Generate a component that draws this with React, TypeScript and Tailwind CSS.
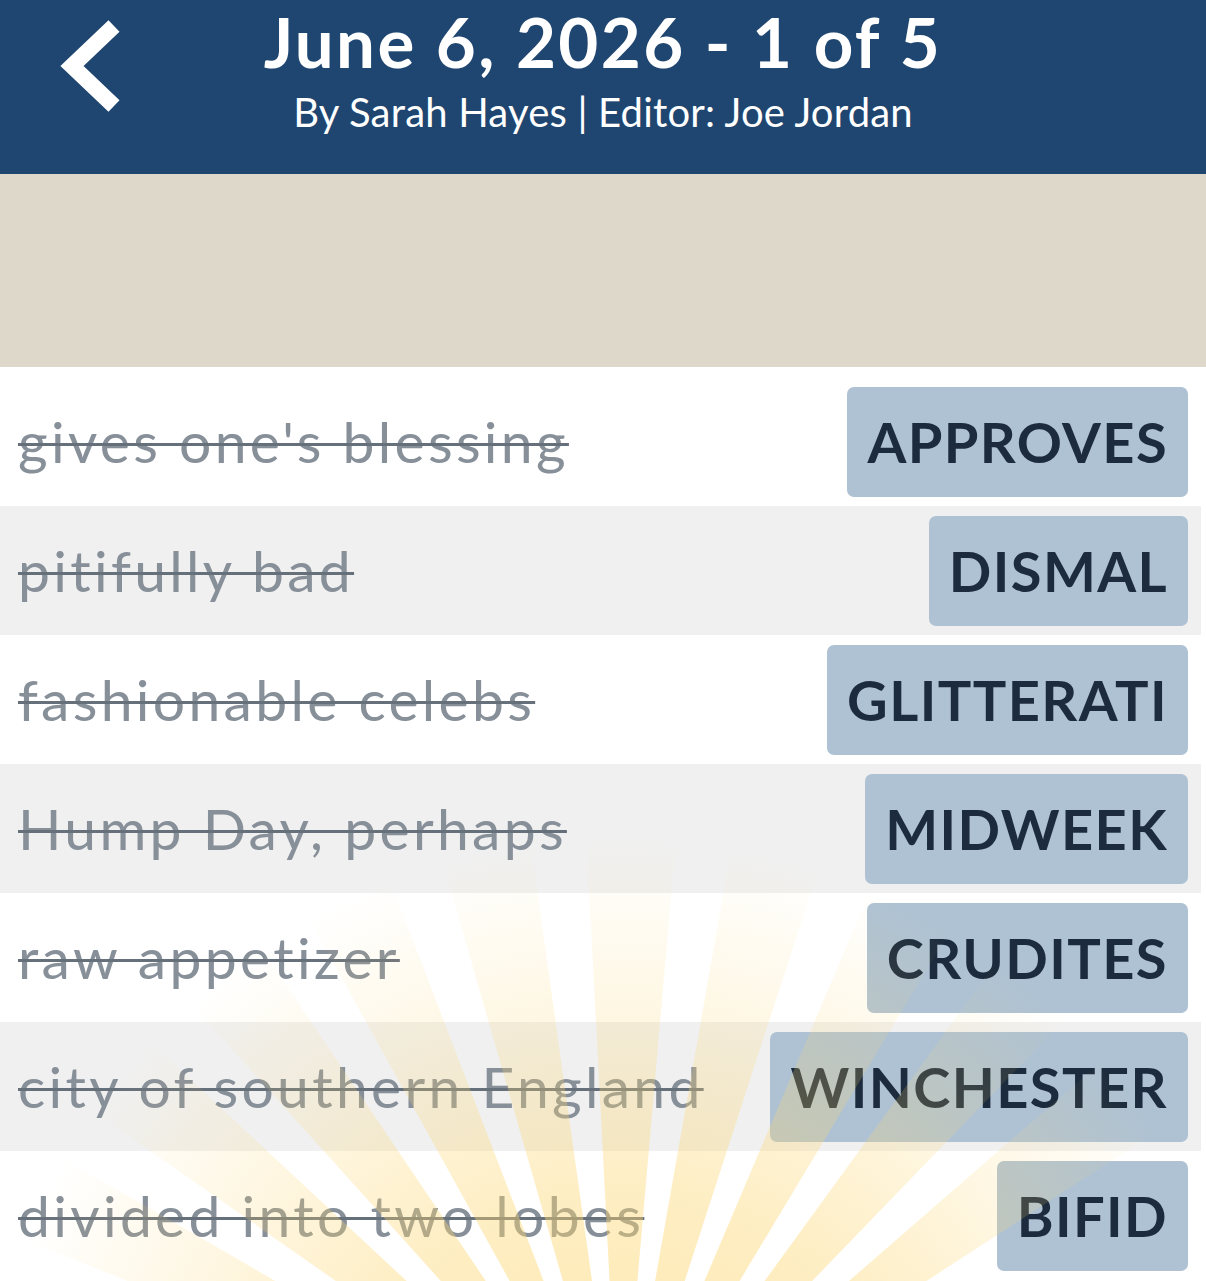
import React from 'react';

const clues = [
  { clue: "gives one's blessing", answer: 'APPROVES' },
  { clue: 'pitifully bad', answer: 'DISMAL' },
  { clue: 'fashionable celebs', answer: 'GLITTERATI' },
  { clue: 'Hump Day, perhaps', answer: 'MIDWEEK' },
  { clue: 'raw appetizer', answer: 'CRUDITES' },
  { clue: 'city of southern England', answer: 'WINCHESTER' },
  { clue: 'divided into two lobes', answer: 'BIFID' },
];

function Sunburst() {
  // rays fanning up from a point below the fold, fading out radially
  const cx = 620;
  const cy = 1480;
  const len = 800;
  const rays = [];
  for (let a = -64; a <= 64; a += 13) {
    const half = 4;
    const r1 = ((a - half - 90) * Math.PI) / 180;
    const r2 = ((a + half - 90) * Math.PI) / 180;
    const p1 = `${cx + Math.cos(r1) * len},${cy + Math.sin(r1) * len}`;
    const p2 = `${cx + Math.cos(r2) * len},${cy + Math.sin(r2) * len}`;
    rays.push(<polygon key={a} points={`${cx},${cy} ${p1} ${p2}`} fill="url(#rayFade)" />);
  }
  return (
    <svg
      className="pointer-events-none absolute left-0 top-0 h-full w-full"
      viewBox="0 0 1206 1281"
      preserveAspectRatio="none"
    >
      <defs>
        <radialGradient id="rayFade" gradientUnits="userSpaceOnUse" cx={cx} cy={cy} r="640">
          <stop offset="0" stopColor="#fcd670" stopOpacity="0.6" />
          <stop offset="0.45" stopColor="#fcd670" stopOpacity="0.42" />
          <stop offset="0.75" stopColor="#fcd670" stopOpacity="0.18" />
          <stop offset="1" stopColor="#fcd670" stopOpacity="0" />
        </radialGradient>
      </defs>
      {rays}
    </svg>
  );
}

export default function App() {
  return (
    <div
      className="relative h-[1281px] w-[1206px] overflow-hidden bg-white"
      style={{ fontFamily: 'Lato, "Open Sans", sans-serif' }}
    >
      {/* Header */}
      <header className="relative flex h-[174px] flex-col items-center bg-[#1f4670] text-white">
        <button className="absolute left-[52px] top-[16px] h-[100px] w-[80px]">
          <svg viewBox="0 0 80 100" className="h-full w-full">
            <polyline
              points="62,10 20,50 62,90"
              fill="none"
              stroke="#ffffff"
              strokeWidth="16"
              strokeLinejoin="miter"
              strokeLinecap="butt"
            />
          </svg>
        </button>
        <h1 className="mt-[7px] text-[69px] font-bold leading-[69px] tracking-[2.4px]">June 6, 2026 - 1 of 5</h1>
        <p className="mt-[13px] text-[40px] leading-[46px] tracking-[0.2px]">By Sarah Hayes | Editor: Joe Jordan</p>
      </header>

      {/* Grid placeholder band */}
      <div className="h-[193px] bg-[#ded8cb]" />

      {/* Clue list */}
      <div className="pt-[10px]">
        {clues.map((c, i) => (
          <div
            key={c.answer}
            className={`mr-[5px] flex h-[129px] items-center justify-between pl-[18px] pr-[13px] ${
              i % 2 === 1 ? 'bg-[#f0f0f0]' : 'bg-white'
            }`}
          >
            <span className="text-[57px] tracking-[3.3px] text-[#878f99] line-through decoration-[#66707b] decoration-[3px]">
              {c.clue}
            </span>
            <span className="flex h-[110px] items-center rounded-[7px] bg-[#afc2d3] px-[20px] text-[56px] font-bold tracking-[1.4px] text-[#1c2b3d]">
              {c.answer}
            </span>
          </div>
        ))}
      </div>

      <Sunburst />
    </div>
  );
}
